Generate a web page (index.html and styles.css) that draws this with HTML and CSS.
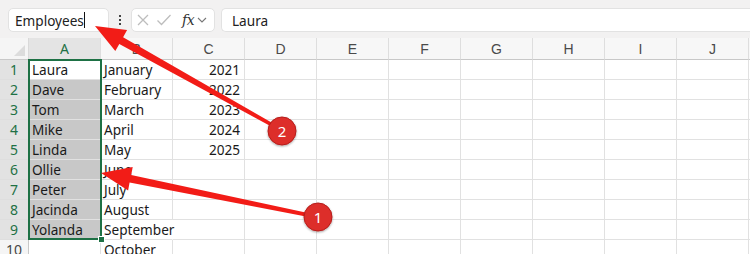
FILE: index.html
```html
<!DOCTYPE html>
<html>
<head>
<meta charset="utf-8">
<link rel="stylesheet" href="styles.css">
</head>
<body>
<div class="page">
  <div class="toolbar">
    <div class="namebox"><span class="nametext">Employees</span><span class="caret"></span></div>
    <div class="kebab"><i></i><i></i><i></i></div>
    <div class="fxbox">
      <svg class="ic" width="14" height="14" viewBox="0 0 14 14"><path d="M2 2L12 12M12 2L2 12" stroke="#bdbdbd" stroke-width="1.3" fill="none"/></svg>
      <svg class="ic" width="16" height="14" viewBox="0 0 16 14"><path d="M1.5 7.5L5.5 11.5L14.5 2" stroke="#bdbdbd" stroke-width="1.3" fill="none"/></svg>
      <span class="fx">fx</span>
      <svg class="chev" width="10" height="8" viewBox="0 0 10 8"><path d="M1 2L5 6L9 2" stroke="#777" stroke-width="1.1" fill="none"/></svg>
    </div>
    <div class="formula">Laura</div>
  </div>

  <div class="sheet">
    <div class="corner"><span class="tri"></span></div>
    <div class="ch sel-h">A</div><div class="ch">B</div><div class="ch">C</div><div class="ch">D</div><div class="ch">E</div><div class="ch">F</div><div class="ch">G</div><div class="ch">H</div><div class="ch">I</div><div class="ch">J</div><div class="ch end"></div>

    <div class="rh sel-r">1</div><div class="c">Laura</div><div class="c">January</div><div class="c n">2021</div><div class="c"></div><div class="c"></div><div class="c"></div><div class="c"></div><div class="c"></div><div class="c"></div><div class="c"></div><div class="c end"></div>
    <div class="rh sel-r">2</div><div class="c s">Dave</div><div class="c">February</div><div class="c n">2022</div><div class="c"></div><div class="c"></div><div class="c"></div><div class="c"></div><div class="c"></div><div class="c"></div><div class="c"></div><div class="c end"></div>
    <div class="rh sel-r">3</div><div class="c s">Tom</div><div class="c">March</div><div class="c n">2023</div><div class="c"></div><div class="c"></div><div class="c"></div><div class="c"></div><div class="c"></div><div class="c"></div><div class="c"></div><div class="c end"></div>
    <div class="rh sel-r">4</div><div class="c s">Mike</div><div class="c">April</div><div class="c n">2024</div><div class="c"></div><div class="c"></div><div class="c"></div><div class="c"></div><div class="c"></div><div class="c"></div><div class="c"></div><div class="c end"></div>
    <div class="rh sel-r">5</div><div class="c s">Linda</div><div class="c">May</div><div class="c n">2025</div><div class="c"></div><div class="c"></div><div class="c"></div><div class="c"></div><div class="c"></div><div class="c"></div><div class="c"></div><div class="c end"></div>
    <div class="rh sel-r">6</div><div class="c s">Ollie</div><div class="c">June</div><div class="c n"></div><div class="c"></div><div class="c"></div><div class="c"></div><div class="c"></div><div class="c"></div><div class="c"></div><div class="c"></div><div class="c end"></div>
    <div class="rh sel-r">7</div><div class="c s">Peter</div><div class="c">July</div><div class="c n"></div><div class="c"></div><div class="c"></div><div class="c"></div><div class="c"></div><div class="c"></div><div class="c"></div><div class="c"></div><div class="c end"></div>
    <div class="rh sel-r">8</div><div class="c s">Jacinda</div><div class="c">August</div><div class="c n"></div><div class="c"></div><div class="c"></div><div class="c"></div><div class="c"></div><div class="c"></div><div class="c"></div><div class="c"></div><div class="c end"></div>
    <div class="rh sel-r">9</div><div class="c s">Yolanda</div><div class="c ov">September</div><div class="c n"></div><div class="c"></div><div class="c"></div><div class="c"></div><div class="c"></div><div class="c"></div><div class="c"></div><div class="c"></div><div class="c end"></div>
    <div class="rh">10</div><div class="c"></div><div class="c">October</div><div class="c n"></div><div class="c"></div><div class="c"></div><div class="c"></div><div class="c"></div><div class="c"></div><div class="c"></div><div class="c"></div><div class="c end"></div>

    <div class="selection"><span class="handle"></span></div>
  </div>

  <svg class="marks" width="750" height="254" viewBox="0 0 750 254">
    <defs>
      <filter id="sh" x="-30%" y="-30%" width="160%" height="160%">
        <feDropShadow dx="0" dy="1" stdDeviation="1.2" flood-color="#000" flood-opacity="0.35"/>
      </filter>
    </defs>
    <polygon fill="#f21c17" points="95,26 127.1,30.1 123.1,37.2 283.7,129.5 282.3,132.5 119.3,44.0 115.3,51.1"/>
    <polygon fill="#f21c17" points="101,173 132.7,167.0 131.2,175.0 318.4,215.3 317.6,218.7 129.6,182.6 128.1,190.6"/>
    <g filter="url(#sh)">
      <circle cx="282" cy="131" r="14" fill="#dd2e2a" stroke="#b51d1a" stroke-width="1"/>
      <circle cx="318" cy="217" r="14" fill="#dd2e2a" stroke="#b51d1a" stroke-width="1"/>
    </g>
    <text x="282" y="136.5" class="badge">2</text>
    <text x="318" y="222.5" class="badge">1</text>
  </svg>
</div>
</body>
</html>
```

FILE: styles.css
```css
* { box-sizing: border-box; }
html, body { margin: 0; padding: 0; }
body {
  background: #ffffff;
  font-family: "Noto Sans", "Liberation Sans", sans-serif;
  color: #222;
  overflow: hidden;
}
.page {
  position: relative;
  width: 750px;
  height: 254px;
  overflow: hidden;
}
.toolbar {
  height: 38px;
  background: #f2f1f1;
  display: flex;
  align-items: flex-start;
  padding: 8px 0 0 8px;
}
.namebox {
  width: 101px;
  height: 24px;
  background: #fff;
  border: 1px solid #e2e2e2;
  border-radius: 5px;
  display: flex;
  align-items: center;
  padding-left: 6px;
  font-size: 13.6px;
  color: #222;
}
.caret {
  display: inline-block;
  width: 1px;
  height: 16px;
  background: #111;
}
.kebab {
  width: 22px;
  height: 24px;
  display: flex;
  flex-direction: column;
  align-items: center;
  justify-content: center;
  gap: 2px;
}
.kebab i {
  display: block;
  width: 2px;
  height: 2px;
  background: #444;
}
.fxbox {
  width: 84px;
  height: 24px;
  background: #fff;
  border: 1px solid #e2e2e2;
  border-radius: 5px;
  display: flex;
  align-items: center;
  padding-left: 4px;
  gap: 6px;
}
.fx {
  font-family: "DejaVu Serif", "Liberation Serif", serif;
  font-style: italic;
  font-size: 14px;
  color: #333;
  margin-left: 4px;
  letter-spacing: -0.5px;
}
.chev { margin-left: -3px; }
.formula {
  margin-left: 6px;
  flex: 1;
  height: 24px;
  background: #fff;
  border: 1px solid #e2e2e2;
  border-right: none;
  border-radius: 5px 0 0 5px;
  display: flex;
  align-items: center;
  padding-left: 10px;
  font-size: 13.6px;
  color: #222;
}
.sheet {
  position: relative;
  display: grid;
  grid-template-columns: 29px repeat(10, 72px) 1fr;
  grid-template-rows: 22px repeat(10, 20px);
  font-size: 13.6px;
}
.corner {
  background: #f5f5f5;
  border-right: 1px solid #d9d9d9;
  border-bottom: 1px solid #c8c8c8;
  position: relative;
}
.tri {
  position: absolute;
  right: 3px;
  bottom: 3px;
  width: 0;
  height: 0;
  border-left: 11px solid transparent;
  border-bottom: 11px solid #dcdcdc;
}
.ch {
  background: #f7f7f7;
  border-right: 1px solid #dedede;
  border-bottom: 1px solid #c8c8c8;
  display: flex;
  align-items: center;
  justify-content: center;
  color: #4a4a4a;
  font-size: 14px;
  font-family: "Liberation Sans", "Noto Sans", sans-serif;
}
.ch.sel-h {
  background: #e4e4e4;
  color: #1e7145;
  font-family: "Noto Sans", sans-serif;
}
.ch.end { border-right: none; }
.rh {
  background: #f5f5f5;
  border-right: 1px solid #c8c8c8;
  border-bottom: 1px solid #dedede;
  display: flex;
  align-items: center;
  justify-content: center;
  color: #444;
  font-size: 14px;
}
.rh.sel-r {
  background: #e2e2e2;
  color: #1e7145;
}
.c {
  border-right: 1px solid #e1e1e1;
  border-bottom: 1px solid #e1e1e1;
  display: flex;
  align-items: center;
  padding: 0 3px;
  white-space: nowrap;
  color: #1a1a1a;
  line-height: 19px;
}
.c.s { background: #c8c8c8; }
.c.n { justify-content: flex-end; padding-right: 4px; }
.c.ov { overflow: visible; border-right-color: transparent; }
.c.end { border-right: none; }
.selection {
  position: absolute;
  left: 28px;
  top: 21px;
  width: 74px;
  height: 181px;
  border: 2px solid #1e7145;
  pointer-events: none;
}
.handle {
  position: absolute;
  right: -5px;
  bottom: -5px;
  width: 7px;
  height: 7px;
  background: #1e7145;
  border: 1px solid #fff;
}
.marks {
  position: absolute;
  left: 0;
  top: 0;
}
.badge {
  fill: #fff;
  font-family: "Noto Sans", sans-serif;
  font-size: 15px;
  text-anchor: middle;
}
```
